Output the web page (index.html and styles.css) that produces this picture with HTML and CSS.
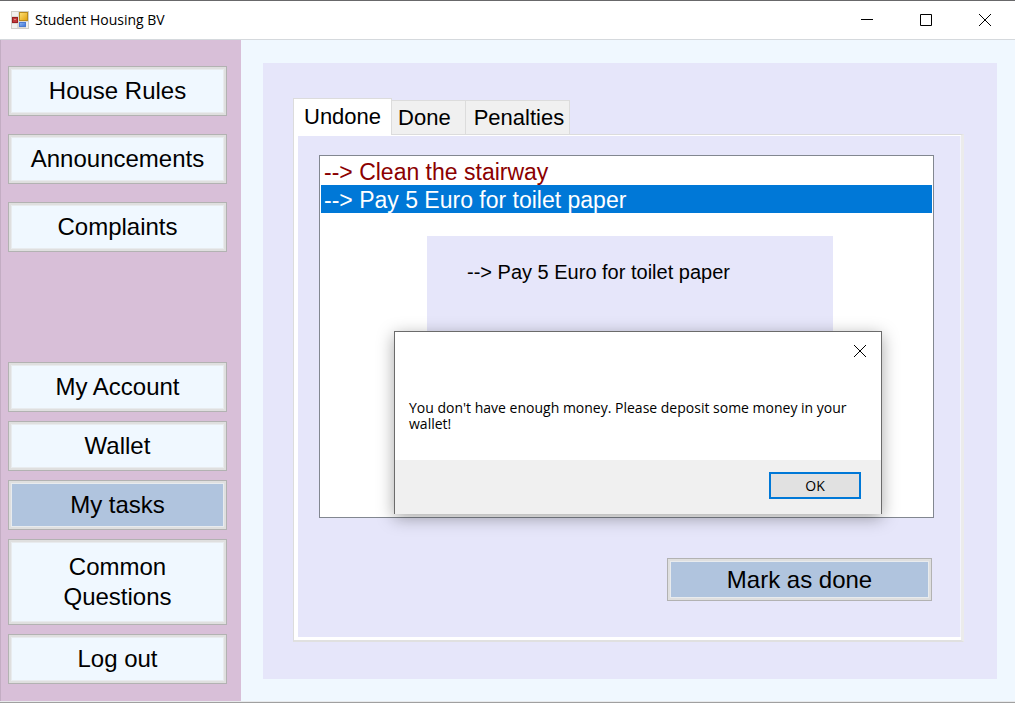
FILE: index.html
```html
<!DOCTYPE html>
<html lang="en">
<head>
<meta charset="utf-8">
<meta name="viewport" content="width=device-width, initial-scale=1">
<title>Student Housing BV</title>
<link rel="stylesheet" href="styles.css">
</head>
<body>
<div class="window">
  <header class="titlebar">
    <svg class="app-icon" viewBox="0 0 18 18" aria-hidden="true">
      <defs>
        <linearGradient id="gold" x1="0" y1="0" x2="1" y2="1"><stop offset="0" stop-color="#ffe27a"/><stop offset="1" stop-color="#e0a00c"/></linearGradient>
        <linearGradient id="blue" x1="0" y1="0" x2="1" y2="1"><stop offset="0" stop-color="#8fb8f4"/><stop offset="1" stop-color="#3f74d4"/></linearGradient>
      </defs>
      <rect x="0.5" y="0.5" width="17" height="17" fill="#dcdad4" stroke="#d0cec8"/>
      <path d="M1 1h6v4H1zM1 13h5v4H1zM15 11h2v6h-2z" fill="#f2f1ee"/>
      <rect x="1.5" y="6.500" width="5" height="5" fill="#c03a3a" stroke="#9a1f22"/>
      <rect x="3" y="8" width="2" height="1" fill="#e08a80"/>
      <rect x="8.500" y="1.500" width="8" height="8" fill="url(#gold)" stroke="#b98a1c"/>
      <rect x="8.500" y="11.500" width="6" height="4" fill="url(#blue)" stroke="#4c7bd0"/>
    </svg>
    <h1 class="title">Student Housing BV</h1>
    <div class="caption-buttons">
      <button class="caption" type="button" aria-label="Minimize"><svg viewBox="0 0 12 12"><path d="M0 5.500h12"/></svg></button>
      <button class="caption" type="button" aria-label="Maximize"><svg viewBox="0 0 12 12"><path d="M.5.500h11v11H.5z"/></svg></button>
      <button class="caption" type="button" aria-label="Close"><svg viewBox="0 0 12 12"><path d="M0 0l12 12M12 0L0 12"/></svg></button>
    </div>
  </header>

  <div class="body">
    <nav class="sidebar" aria-label="Main">
      <div class="nav-top">
        <button class="nav-button" type="button">House Rules</button>
        <button class="nav-button" type="button">Announcements</button>
        <button class="nav-button" type="button">Complaints</button>
      </div>
      <div class="nav-bottom">
        <button class="nav-button" type="button">My Account</button>
        <button class="nav-button" type="button">Wallet</button>
        <button class="nav-button current" type="button">My tasks</button>
        <button class="nav-button tall" type="button">Common<br>Questions</button>
        <button class="nav-button" type="button">Log out</button>
      </div>
    </nav>

    <main class="content">
      <section class="panel">
        <div class="tabs" role="tablist">
          <button class="tab active" type="button" role="tab" aria-selected="true">Undone</button>
          <button class="tab" type="button" role="tab" aria-selected="false">Done</button>
          <button class="tab" type="button" role="tab" aria-selected="false">Penalties</button>
        </div>
        <div class="tab-page" role="tabpanel">
          <div class="stage">
            <select class="task-list" size="4" aria-label="Undone tasks">
              <option class="task">--&gt; Clean the stairway</option>
              <option class="task" selected>--&gt; Pay 5 Euro for toilet paper</option>
            </select>
            <div class="detail">--&gt; Pay 5 Euro for toilet paper</div>
            <div class="dialog" role="alertdialog" aria-labelledby="message">
              <button class="dialog-close" type="button" aria-label="Close"><svg viewBox="0 0 12 12"><path d="M0 0l12 12M12 0L0 12"/></svg></button>
              <p class="message" id="message">You don't have enough money. Please deposit some money in your wallet!</p>
              <div class="dialog-footer"><button class="ok" type="button">OK</button></div>
            </div>
          </div>
          <button class="mark" type="button">Mark as done</button>
        </div>
      </section>
    </main>
  </div>
</div>
</body>
</html>
```
FILE: styles.css
```css
* { box-sizing: border-box; }

body {
  margin: 0;
  color: #000;
  font-family: "Liberation Sans", Arial, sans-serif;
}

button { font: inherit; color: inherit; cursor: pointer; }

.window {
  display: flex;
  flex-direction: column;
  min-height: 100vh;
  border-top: 1px solid #68686a;
  border-bottom: 1px solid #a0a0a0;
  background: #fff;
}

.titlebar {
  display: flex;
  align-items: center;
  height: 39px;
  padding: 0 1px 0 11px;
  border-bottom: 1px solid #d5d9dd;
}

.app-icon { width: 18px; height: 18px; }

.title {
  margin: 0 auto 0 6px;
  font: 400 14px/20px "Open Sans", sans-serif;
}

.caption-buttons { display: flex; align-self: stretch; }

.caption {
  display: grid;
  place-items: center;
  width: 59px;
  padding: 0;
  border: 0;
  background: none;
}

.caption svg,
.dialog-close svg {
  display: block;
  width: 12px;
  height: 12px;
  fill: none;
  stroke: #000;
}

.body {
  display: flex;
  flex: 1;
  border-bottom: 1px solid #e8eaec;
}

.sidebar {
  display: flex;
  flex: none;
  flex-direction: column;
  justify-content: space-between;
  gap: 18px;
  width: 241px;
  padding: 26px 14px 17px 7px;
  border-left: 1px solid #c3adc3;
  background: #d8bfd8;
}

.nav-top,
.nav-bottom { display: flex; flex-direction: column; }

.nav-top { gap: 18px; }
.nav-bottom { gap: 9px; }

.nav-button,
.mark {
  padding: 0;
  border: 1px solid #b2b2b2;
  background: #f0f8ff;
  box-shadow: inset 0 0 0 2px #dfdfdf, inset 0 0 0 3px #e8ebee;
  font-size: 24px;
  line-height: 30px;
}

.nav-button { min-height: 50px; }
.nav-button.tall { min-height: 86px; }
.nav-button.current,
.mark { background: #b0c4de; }

.content {
  display: flex;
  flex: 1;
  min-width: 0;
  padding: 23px 18px 22px 22px;
  background: #f0f8ff;
}

.panel {
  display: flex;
  flex: 1;
  flex-direction: column;
  min-width: 0;
  padding: 35px 33px 37px 30px;
  background: #e6e6fa;
}

.tabs { display: flex; align-items: flex-end; }

.tab {
  height: 34px;
  padding: 0 5px 0 6px;
  border: 1px solid #dcdcdc;
  border-width: 1px 1px 0 0;
  background: #f0f0f0;
  font-size: 22px;
  line-height: 34px;
}

.tab:nth-child(2) { padding-right: 14px; }
.tab:nth-child(3) { padding: 0 5px 0 8px; }

.tab.active {
  height: 37px;
  margin-bottom: -1px;
  padding: 0 10px;
  border-left-width: 1px;
  background: #fff;
}

.tab-page {
  display: flex;
  flex: 1;
  flex-direction: column;
  padding: 20px 27px 39px 25px;
  border: solid;
  border-width: 1px 3px 2px 1px;
  border-color: #dcdcdc #ebebeb #e0e0e0 #dcdcdc;
  box-shadow: inset 4px 0 0 #fff, inset 0 -3px 0 #fff, inset 0 1px 0 #fff, inset -1px 0 0 #f4f4fc;
}

.tab.active { position: relative; }

.stage { position: relative; display: flex; flex: 1; min-height: 362px; }

.task-list {
  flex: 1;
  min-width: 0;
  padding: 1px;
  border: 1px solid #828790;
  border-radius: 0;
  outline: 0;
  background: #fff;
  font: 23px/26px "Liberation Sans", Arial, sans-serif;
  overflow: hidden;
}

.task { height: 28px; padding: 2px 2px 0 3px; color: #8b0000; }

.task:checked {
  background: #0078d7 linear-gradient(#0078d7, #0078d7);
  color: #fff;
}

.detail {
  position: absolute;
  top: 81px;
  left: 108px;
  width: 406px;
  height: 200px;
  padding: 24px 40px;
  background: #e6e6fa;
  font-size: 20px;
  line-height: 24px;
  white-space: nowrap;
}

.dialog {
  position: absolute;
  top: 176px;
  left: 75px;
  display: flex;
  flex-direction: column;
  width: 488px;
  height: 183px;
  border: 1px solid #6b6b6b;
  border-bottom: 0;
  background: #fff;
  box-shadow: 0 4px 16px rgba(0, 0, 0, .35);
}

.dialog-close {
  align-self: flex-end;
  width: 42px;
  height: 38px;
  padding: 0 15px;
  border: 0;
  background: none;
}

.message {
  flex: 1;
  margin: 0;
  padding: 30px 28px 28px 14px;
  font: 14px/16px "Open Sans", sans-serif;
}

.dialog-footer {
  display: flex;
  justify-content: flex-end;
  padding: 12px 20px 15px;
  background: #f0f0f0;
}

.ok {
  width: 92px;
  height: 27px;
  padding: 0;
  border: 2px solid #0078d7;
  background: #e1e1e1;
  font: 14px/20px "Open Sans", sans-serif;
}

.mark {
  align-self: flex-end;
  width: 265px;
  height: 43px;
  margin: 40px 2px 0 0;
}
```
